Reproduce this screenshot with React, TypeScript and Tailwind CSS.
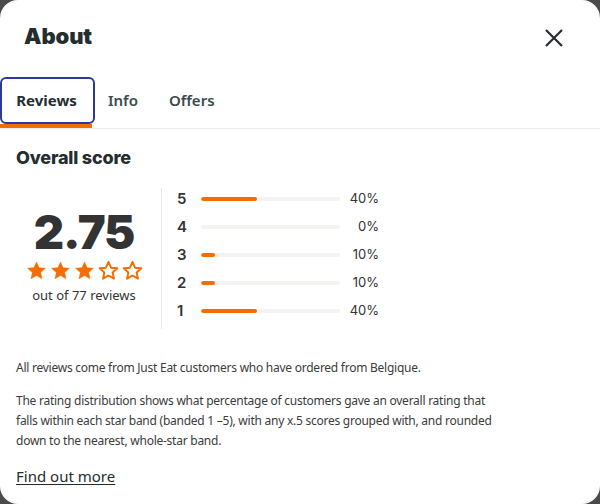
import React from "react";

const bars = [
  { label: "5", pct: 40 },
  { label: "4", pct: 0 },
  { label: "3", pct: 10 },
  { label: "2", pct: 10 },
  { label: "1", pct: 40 },
];

function Star({ filled }: { filled: boolean }) {
  return (
    <svg width="21" height="21" viewBox="0 0 24 24">
      <path
        d="M12 2.2l2.95 6.6 7.2.7-5.45 4.8 1.6 7.05L12 17.7l-6.3 3.65 1.6-7.05L1.85 9.5l7.2-.7z"
        fill={filled ? "#f36d00" : "white"}
        stroke="#f36d00"
        strokeWidth={filled ? 0.6 : 2.2}
        strokeLinejoin="round"
      />
    </svg>
  );
}

export default function App() {
  return (
    <div className="w-[600px] h-[504px] bg-[#4a4a4a] overflow-hidden">
      <div
        className="w-full h-full bg-white rounded-[18px] flex flex-col text-[#242e30]"
        style={{ fontFamily: "'Noto Sans', sans-serif" }}
      >
        <div className="flex items-start justify-between pl-6 pr-9 pt-[22px] h-[77px]">
          <h1 className="text-[22px] leading-[28px] font-black tracking-[-0.1px]" style={{ fontFamily: "Inter, sans-serif" }}>
            About
          </h1>
          <svg width="20" height="20" viewBox="0 0 20 20" className="mt-[6px]">
            <path d="M2 2L18 18M18 2L2 18" stroke="#242e30" strokeWidth="2.2" />
          </svg>
        </div>
        <div className="flex border-b border-[#ececec] h-[52px]">
          <div className="relative w-[95px] h-[51px]">
            <div className="absolute left-0 top-0 w-[95px] h-[47px] rounded-[6px] border-2 border-[#2c3b96] flex items-center justify-center">
              <span className="text-[15px] font-bold -ml-[2px]">Reviews</span>
            </div>
            <div className="absolute left-0 bottom-0 w-[92px] h-[4px] bg-[#f36d00]" />
          </div>
          <div className="h-[47px] flex items-center pl-[13px] pr-[6px]">
            <span className="text-[15px] font-semibold text-[#3b4a4c]">Info</span>
          </div>
          <div className="h-[47px] flex items-center pl-[25px]">
            <span className="text-[15px] font-semibold text-[#3b4a4c]">Offers</span>
          </div>
        </div>
        <div className="px-4 pt-[18px]">
          <h2 className="text-[18px] font-extrabold leading-[22px] tracking-[-0.2px]" style={{ fontFamily: "Inter, sans-serif" }}>
            Overall score
          </h2>
          <div className="flex mt-[19px] h-[141px]">
            <div className="w-[136px] mr-[9px] flex flex-col items-center pt-[22px]">
              <div
                className="text-[47px] font-black leading-[44px] tracking-[-1.2px] text-[#333]"
                style={{ fontFamily: "Inter, sans-serif" }}
              >
                2.75
              </div>
              <div className="flex gap-[3px] mt-[6px]">
                <Star filled />
                <Star filled />
                <Star filled />
                <Star filled={false} />
                <Star filled={false} />
              </div>
              <div className="text-[13px] mt-[5px] text-[#333]">out of 77 reviews</div>
            </div>
            <div className="w-px bg-[#e8e8e8] h-full" />
            <div className="flex flex-col pl-[15px] pt-[1px] gap-[8px]" style={{ fontFamily: "Inter, sans-serif" }}>
              {bars.map((b) => (
                <div key={b.label} className="flex items-center h-[20px]">
                  <span className="w-[24px] text-[15px] font-semibold text-[#333]">{b.label}</span>
                  <div className="w-[139px] h-[4px] rounded-full bg-[#f5f3f1] overflow-hidden">
                    <div className="h-full bg-[#f36d00] rounded-full" style={{ width: `${b.pct}%` }} />
                  </div>
                  <span className="w-[39px] text-right text-[13px] text-[#333]">{b.pct}%</span>
                </div>
              ))}
            </div>
          </div>
          <p className="text-[12px] leading-[20px] tracking-[-0.25px] text-[#3c3c3c] mt-[29px]">
            All reviews come from Just Eat customers who have ordered from Belgique.
          </p>
          <p className="text-[12px] leading-[20px] tracking-[-0.25px] text-[#3c3c3c] mt-[13px]">
            The rating distribution shows what percentage of customers gave an overall rating that
            <br />
            falls within each star band (banded 1 –5), with any x.5 scores grouped with, and rounded
            <br />
            down to the nearest, whole-star band.
          </p>
          <a className="block mt-[14px] text-[15px] leading-[22px] underline underline-offset-2 text-[#242e30]">Find out more</a>
        </div>
      </div>
    </div>
  );
}
